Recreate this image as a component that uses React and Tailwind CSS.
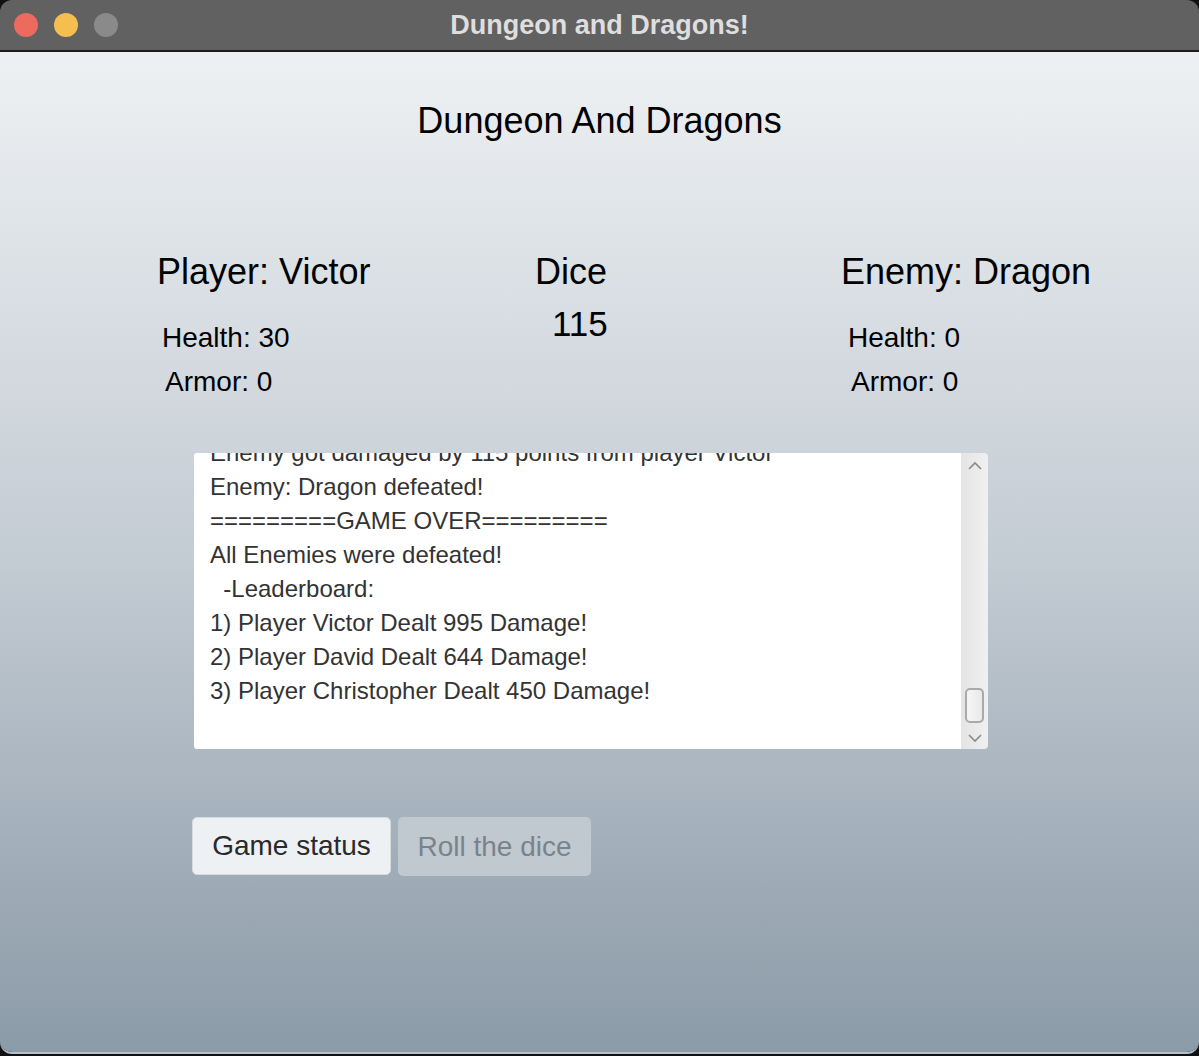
import React from "react";

const logLines = [
  "Enemy got damaged by 115 points from player Victor",
  "Enemy: Dragon defeated!",
  "=========GAME OVER=========",
  "All Enemies were defeated!",
  "  -Leaderboard:",
  "1) Player Victor Dealt 995 Damage!",
  "2) Player David Dealt 644 Damage!",
  "3) Player Christopher Dealt 450 Damage!",
];

function TitleBar() {
  return (
    <div className="relative h-[52px] shrink-0 bg-[#616161] border-b-2 border-[#1c1c1c] flex items-center justify-center">
      <div className="absolute left-[14px] top-[13px] flex gap-[16px]">
        <span className="w-[24px] h-[24px] rounded-full bg-[#ec6a5e]" />
        <span className="w-[24px] h-[24px] rounded-full bg-[#f4bf4f]" />
        <span className="w-[24px] h-[24px] rounded-full bg-[#8a8a8a]" />
      </div>
      <span className="text-[27px] font-bold text-[#dedede] font-['Liberation_Sans',sans-serif]">
        Dungeon and Dragons!
      </span>
    </div>
  );
}

function Stat({ children, offset }) {
  return (
    <div className={`text-[28px] leading-[44px] text-black ${offset}`}>{children}</div>
  );
}

function Scrollbar() {
  return (
    <div className="w-[27px] h-full bg-gradient-to-r from-[#e4e4e4] to-[#f0f0f0] rounded-r-[4px] flex flex-col items-center justify-between py-[6px]">
      <svg width="16" height="10" viewBox="0 0 16 10" className="mt-[2px]">
        <path d="M2 8 L8 2 L14 8" fill="none" stroke="#8a8a8a" strokeWidth="1.6" />
      </svg>
      <div className="flex flex-col items-center gap-[10px]">
        <div className="w-[19px] h-[35px] rounded-[5px] border-2 border-[#a9a9a9] bg-gradient-to-r from-[#f6f6f6] to-[#e9e9e9]" />
        <svg width="16" height="10" viewBox="0 0 16 10">
          <path d="M2 2 L8 8 L14 2" fill="none" stroke="#8a8a8a" strokeWidth="1.6" />
        </svg>
      </div>
    </div>
  );
}

export default function App() {
  return (
    <div className="w-[1199px] h-[1056px] bg-[#111111] font-['Liberation_Sans',Arial,sans-serif]">
      <div className="w-[1199px] h-[1054px] rounded-[12px] overflow-hidden flex flex-col border-b-2 border-[#b4c0cb]">
        <TitleBar />
        <div className="flex-1 bg-gradient-to-b from-[#eef1f3] via-[#c4ccd4] to-[#8c9ba8] flex flex-col">
          <h1 className="mt-[49px] text-center text-[36px] leading-[40px] text-black">
            Dungeon And Dragons
          </h1>

          <div className="mt-[111px] flex pl-[157px]">
            <div className="w-[378px]">
              <div className="text-[36px] leading-[40px]">Player: Victor</div>
              <div className="mt-[24px]">
                <Stat offset="ml-[5px]">Health: 30</Stat>
                <Stat offset="ml-[8px]">Armor: 0</Stat>
              </div>
            </div>
            <div className="w-[306px]">
              <div className="text-[36px] leading-[40px]">Dice</div>
              <div className="mt-[12px] ml-[17px] text-[35px] leading-[40px]">115</div>
            </div>
            <div>
              <div className="text-[36px] leading-[40px]">Enemy: Dragon</div>
              <div className="mt-[24px]">
                <Stat offset="ml-[7px]">Health: 0</Stat>
                <Stat offset="ml-[10px]">Armor: 0</Stat>
              </div>
            </div>
          </div>

          <div className="mt-[49px] ml-[194px] w-[794px] h-[296px] flex">
            <div className="flex-1 bg-white rounded-l-[3px] overflow-hidden pl-[16px]">
              <div className="mt-[-17px] text-[24px] leading-[34px] text-[#333333] whitespace-pre">
                {logLines.map((line, i) => (
                  <div key={i}>{line}</div>
                ))}
              </div>
            </div>
            <Scrollbar />
          </div>

          <div className="mt-[68px] ml-[192px] flex gap-[7px]">
            <button className="w-[199px] h-[58px] rounded-[5px] bg-[#eef1f3] border border-[#d6dbe0] text-[28px] text-[#2a2a2a]">
              Game status
            </button>
            <button className="w-[193px] h-[59px] rounded-[5px] bg-[#c0c8d0] text-[28px] text-[#7a838c]">
              Roll the dice
            </button>
          </div>
        </div>
      </div>
    </div>
  );
}
